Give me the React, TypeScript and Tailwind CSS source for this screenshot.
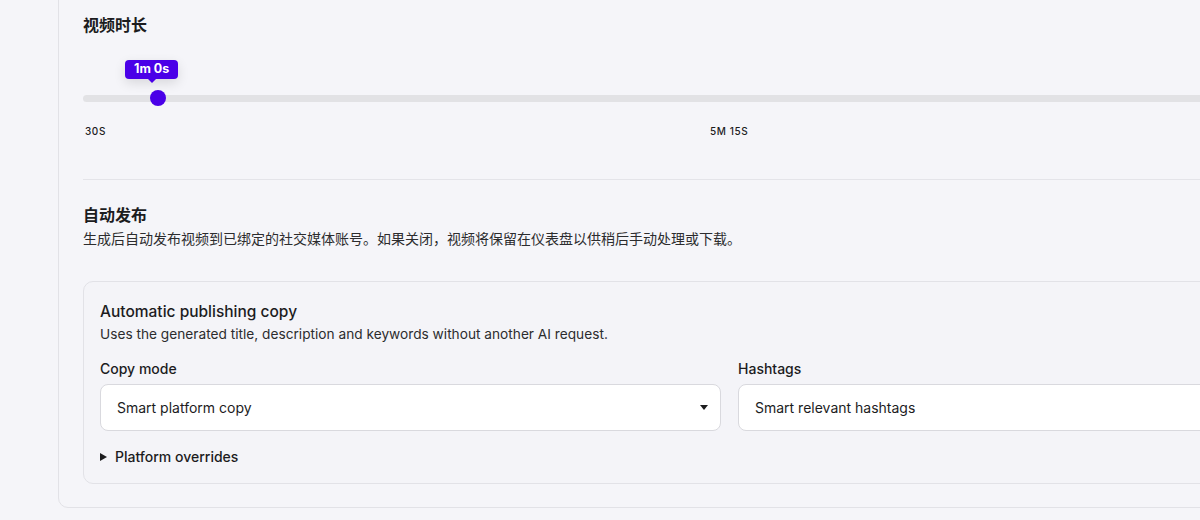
import React from "react";

const FONT = { fontFamily: 'Inter, "Noto Sans CJK SC", "Noto Sans", sans-serif' };

function DurationSlider() {
  return (
    <div>
      <h3 className="text-[16px] font-semibold leading-[22px] text-[#1c1c1e]">视频时长</h3>
      <div className="relative mt-[54px] h-[16px] flex items-center">
        <div className="h-[7px] w-full rounded-full bg-[#e2e2e5]" />
        <div className="absolute left-[67px] top-0 h-[16px] w-[16px] rounded-full bg-[#4a00e8]" />
        <div className="absolute left-[42px] top-[-30px] flex flex-col items-center">
          <div className="rounded-[4px] bg-[#4a00e8] px-[9px] h-[19px] flex items-center text-[12.5px] font-bold text-white shadow-[0_4px_12px_rgba(0,0,0,0.12)]">
            1m 0s
          </div>
          <div className="h-0 w-0 border-x-[4px] border-t-[4px] border-x-transparent border-t-[#4a00e8]" />
        </div>
      </div>
      <div className="mt-[18px] flex justify-between px-[2px] text-[10px] font-medium tracking-[0.06em] text-[#1c1c1e]">
        <span>30S</span>
        <span>5M 15S</span>
        <span className="invisible">10M</span>
      </div>
    </div>
  );
}

function SelectBox({ value }: { value: string }) {
  return (
    <div className="flex h-[47px] items-center justify-between rounded-[8px] border border-[#d9d9de] bg-white pl-[16px] pr-[12px] text-[14px] text-[#1c1c1e]">
      <span>{value}</span>
      <span className="h-0 w-0 border-x-[4px] border-t-[5px] border-x-transparent border-t-[#1c1c1e]" />
    </div>
  );
}

export default function App() {
  return (
    <div className="h-[520px] w-[1200px] overflow-hidden bg-[#f5f5f9]" style={FONT}>
      <div className="ml-[58px] -mt-[16px] w-[1343px] rounded-[10px] border border-[#e2e2e7] bg-[#f5f5f9] px-[24px] pt-[29px] pb-[23px]">
        <DurationSlider />

        <div className="mt-[40px] border-t border-[#e4e4e9]" />

        <div className="mt-[24px]">
          <h3 className="text-[16px] font-semibold leading-[22px] text-[#1c1c1e]">自动发布</h3>
          <p className="mt-[3px] text-[14px] leading-[20px] text-[#2c2c2e]">
            生成后自动发布视频到已绑定的社交媒体账号。如果关闭，视频将保留在仪表盘以供稍后手动处理或下载。
          </p>
        </div>

        <div className="mt-[32px] rounded-[10px] border border-[#e2e2e7] bg-[#f4f4f8] px-[16px] pt-[19px] pb-[16px]">
          <h4 className="text-[15.5px] font-medium leading-[22px] text-[#1c1c1e]">Automatic publishing copy</h4>
          <p className="mt-[1px] text-[13.7px] leading-[20px] text-[#2c2c2e]">
            Uses the generated title, description and keywords without another AI request.
          </p>
          <div className="mt-[15px] grid grid-cols-2 gap-[17px]">
            <div>
              <div className="mb-[5px] text-[14px] font-medium leading-[20px] text-[#1c1c1e]">Copy mode</div>
              <SelectBox value="Smart platform copy" />
            </div>
            <div>
              <div className="mb-[5px] text-[14px] font-medium leading-[20px] text-[#1c1c1e]">Hashtags</div>
              <SelectBox value="Smart relevant hashtags" />
            </div>
          </div>
          <div className="mt-[16px] flex items-center gap-[8px] text-[14px] font-medium leading-[20px] text-[#1c1c1e]">
            <span className="h-0 w-0 border-y-[4px] border-l-[7px] border-y-transparent border-l-[#1c1c1e]" />
            <span>Platform overrides</span>
          </div>
        </div>
      </div>
    </div>
  );
}
